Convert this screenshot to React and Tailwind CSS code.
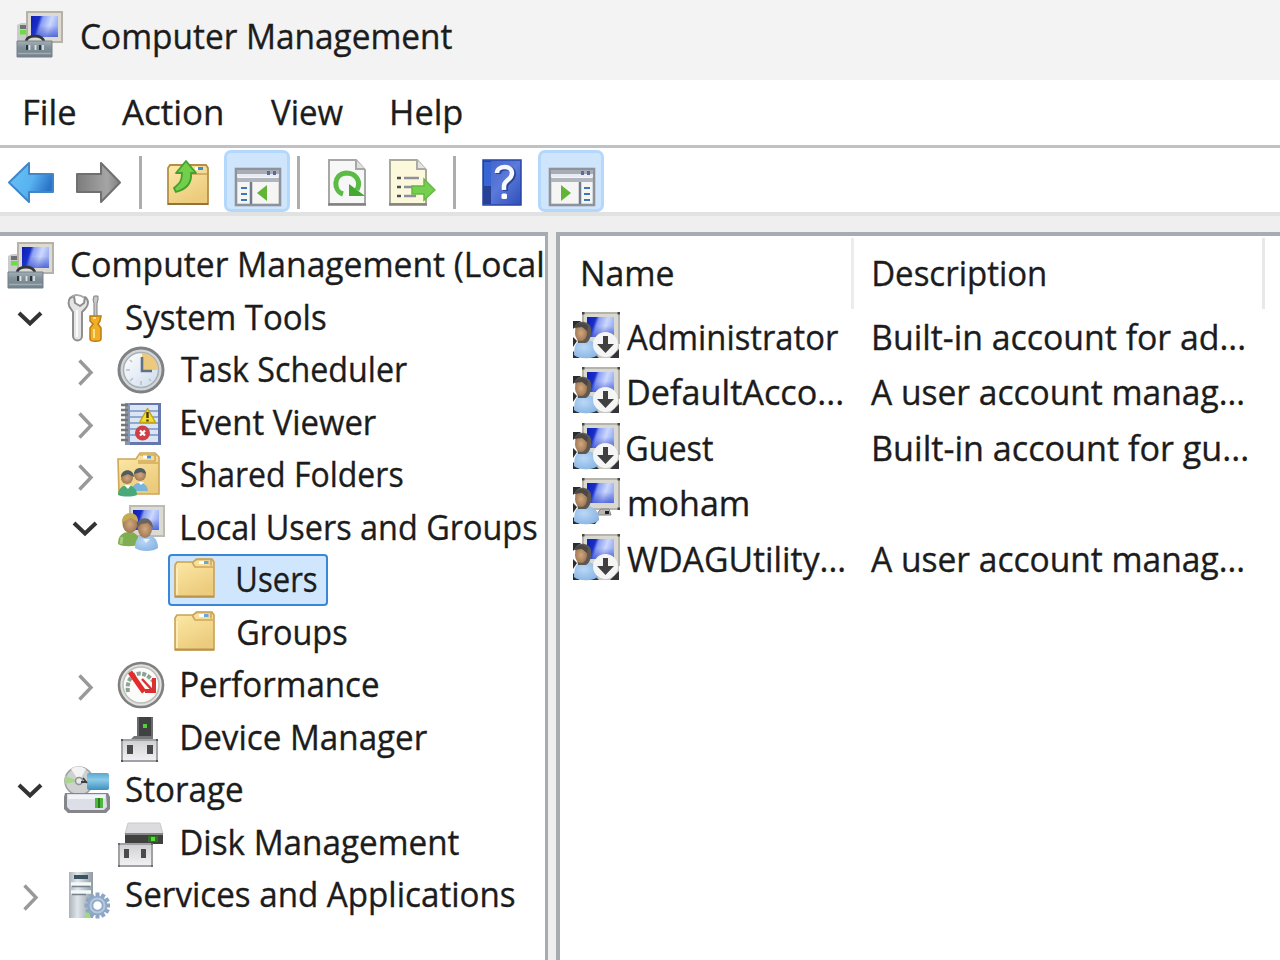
import React from 'react';

const FONT = '35px "Open Sans"';
let ctx;

// Label stretched horizontally so that its ink spans exactly `w` pixels.
function Label({ children, w, className = '' }) {
  ctx = ctx || document.createElement('canvas').getContext('2d');
  ctx.font = FONT;
  const m = ctx.measureText(children);
  const scale = w / (m.actualBoundingBoxLeft + m.actualBoundingBoxRight);
  return (
    <span
      className={`block shrink-0 whitespace-nowrap text-[35px] leading-[48px] [-webkit-text-stroke:0.35px_#1c1c1c] ${className}`}
      style={{ width: w }}
    >
      <span
        className="block w-max origin-left"
        style={{ transform: `translateX(${m.actualBoundingBoxLeft * scale}px) scaleX(${scale})` }}
      >
        {children}
      </span>
    </span>
  );
}

function Svg({ children, className = 'h-12 w-12' }) {
  return (
    <svg viewBox="0 0 48 48" className={`block shrink-0 ${className}`} fill="none">
      {children}
    </svg>
  );
}

function Defs() {
  return (
    <svg className="absolute h-0 w-0">
      <defs>
        <linearGradient id="screen" x1="0" y1="0" x2="1" y2="0.25">
          <stop offset="0" stopColor="#0d1fb4" />
          <stop offset="0.32" stopColor="#1a2fc8" />
          <stop offset="0.44" stopColor="#8a9ef2" />
          <stop offset="0.75" stopColor="#ccd8fd" />
          <stop offset="1" stopColor="#9db2f4" />
        </linearGradient>
        <linearGradient id="shade" x1="0" y1="0" x2="0" y2="1">
          <stop offset="0.45" stopColor="#2038c8" stopOpacity="0" />
          <stop offset="1" stopColor="#2038c8" stopOpacity="0.6" />
        </linearGradient>
        <linearGradient id="folder" x1="0" y1="0" x2="0.5" y2="1">
          <stop offset="0" stopColor="#fdeaa9" />
          <stop offset="1" stopColor="#eccb7c" />
        </linearGradient>
        <linearGradient id="blue" x1="0" y1="0" x2="1" y2="0.4">
          <stop offset="0.2" stopColor="#64bdf5" />
          <stop offset="0.6" stopColor="#58b2f0" />
          <stop offset="1" stopColor="#2b74c8" />
        </linearGradient>
        <linearGradient id="grey" x1="0" y1="0" x2="1" y2="0">
          <stop offset="0" stopColor="#7c7c7c" />
          <stop offset="0.7" stopColor="#a5a5a5" />
          <stop offset="1" stopColor="#808080" />
        </linearGradient>
        <linearGradient id="steel" x1="0" y1="0" x2="1" y2="0">
          <stop offset="0" stopColor="#a9b3ba" />
          <stop offset="0.35" stopColor="#dfe6ea" />
          <stop offset="1" stopColor="#8f9ba4" />
        </linearGradient>
        <linearGradient id="box" x1="0" y1="0" x2="0" y2="1">
          <stop offset="0" stopColor="#a3afb6" />
          <stop offset="0.4" stopColor="#82909a" />
          <stop offset="1" stopColor="#74828c" />
        </linearGradient>
        <linearGradient id="dial" x1="0" y1="0" x2="1" y2="1">
          <stop offset="0" stopColor="#ffffff" />
          <stop offset="1" stopColor="#cddcec" />
        </linearGradient>
        <linearGradient id="help" x1="0" y1="0" x2="1" y2="1">
          <stop offset="0" stopColor="#3f60c8" />
          <stop offset="0.5" stopColor="#5b7ada" />
          <stop offset="1" stopColor="#2f4fb8" />
        </linearGradient>
        <linearGradient id="usb" x1="0" y1="0" x2="0" y2="1">
          <stop offset="0" stopColor="#d0d0d4" />
          <stop offset="1" stopColor="#f2f2f4" />
        </linearGradient>
        <linearGradient id="cyan" x1="0" y1="0" x2="0" y2="1">
          <stop offset="0" stopColor="#5aa6cf" />
          <stop offset="0.4" stopColor="#8ccbe8" />
          <stop offset="1" stopColor="#3f8fc0" />
        </linearGradient>
        <radialGradient id="face" cx="0.5" cy="0.5" r="0.6">
          <stop offset="0" stopColor="#d3a87e" />
          <stop offset="1" stopColor="#96704c" />
        </radialGradient>
        <radialGradient id="shirt" cx="0.4" cy="0.4" r="0.7">
          <stop offset="0" stopColor="#b9d8f6" />
          <stop offset="1" stopColor="#86b2e2" />
        </radialGradient>
      </defs>
    </svg>
  );
}

function ComputerIcon() {
  return (
    <Svg>
      <path d="M2 15l4-2h6v19H2z" fill="#c9cccd" />
      <path d="M5 15h7v4H5z" fill="#6b7276" />
      <path d="M5 20h6v4.500H5z" fill="#69e03a" />
      <rect x="12" y="2" width="35" height="30" fill="#dddbd1" stroke="#b5b3a9" strokeWidth="2" />
      <rect x="16" y="6" width="27" height="21" fill="url(#screen)" />
      <rect x="16" y="6" width="27" height="21" fill="url(#shade)" />
      <path d="M11 31c2-6 15-7 18 0" stroke="#30363a" strokeWidth="2.600" />
      <path d="M2 31h35v16H2z" fill="url(#box)" stroke="#74818a" strokeWidth="1" />
      <path d="M3 43.500h33" stroke="#9fadb6" strokeWidth="1.500" />
      <path d="M12 35v5M25 35v5" stroke="#2e3438" strokeWidth="2" />
      <path d="M14.500 35v5M20.500 35v5M28 35v5" stroke="#d9dfe2" strokeWidth="1.800" />
    </Svg>
  );
}

function ToolsIcon() {
  return (
    <Svg>
      <path d="M8 4c-2 3-2 8 1 11l2 3v24c0 6 9 6 9 0V18l3-3c4-4 4-9 0-12l-1 6-4 3-5-3-1-7z" fill="#e4e4e4" stroke="#8e8e8e" strokeWidth="2" strokeLinejoin="round" />
      <path d="M15 16v27" stroke="#fafafa" strokeWidth="2" />
      <path d="M10 2.500c3-2 8-2 12 1" stroke="#a8a8a8" strokeWidth="2" />
      <path d="M32 2h4v4l-1 3v14h-3V9l-1-3z" fill="#c8c8c8" stroke="#808080" strokeWidth="1" />
      <path d="M28 22h11l-1 5-2 3 3 4v11c0 3-11 3-11 0V34l3-4-3-3z" fill="#efae27" stroke="#bd7b10" strokeWidth="1.500" />
      <path d="M32 35v9M31 24h3" stroke="#ffe085" strokeWidth="2" />
    </Svg>
  );
}

function ClockIcon() {
  return (
    <Svg>
      <circle cx="24" cy="24" r="22" fill="#d4d6d8" stroke="#7f8284" strokeWidth="3" />
      <circle cx="24" cy="24" r="17.500" fill="url(#dial)" stroke="#a9b1b8" strokeWidth="1.500" />
      <path d="M25 24V7a17 17 0 0 1 16 17z" fill="#ecc97c" />
      <path d="M25 11v14h10" stroke="#627286" strokeWidth="2.600" />
      <path d="M24 35v4M9 24h4M13 14l2 2M13 35l3-3M34 35l-2-2" stroke="#b4bfca" strokeWidth="1.500" />
    </Svg>
  );
}

function EventIcon() {
  return (
    <Svg>
      <rect x="8" y="4" width="36" height="42" fill="#6478ad" />
      <rect x="12" y="6" width="29" height="37" fill="#dbe6f4" />
      <path d="M12 12h29M12 18h29M12 24h29M12 30h29M12 36h29" stroke="#91a9ce" strokeWidth="1.800" />
      <path d="M8 4h5v42H8z" fill="#8796ae" />
      <path d="M4 6h7M4 11h7M4 16h7M4 21h7M4 26h7M4 31h7M4 36h7M4 41h7" stroke="#777" strokeWidth="2.600" />
      <path d="M30.500 9.500l8 14h-16z" fill="#f5dc35" stroke="#c5a615" strokeWidth="1.500" strokeLinejoin="round" />
      <path d="M30.500 13v6M30.500 20.500v2" stroke="#433b17" strokeWidth="2.400" />
      <circle cx="25.500" cy="34" r="7.500" fill="#cf3f45" />
      <path d="M23 31.500l5 5M28 31.500l-5 5" stroke="#fff" strokeWidth="2.200" />
    </Svg>
  );
}

function SharedIcon() {
  return (
    <Svg>
      <path d="M1 8h18l4-6h15l4 4v37H2z" fill="url(#folder)" stroke="#cda75a" strokeWidth="1.600" />
      <path d="M21 12h20M23 4h15v6H21" stroke="#d3aa59" strokeWidth="1.600" />
      <path d="M26 6h8" stroke="#fff" strokeWidth="3" />
      <path d="M30 6h4" stroke="#4a94dd" strokeWidth="3" />
      <path d="M15 40c0-11 15-11 16 0z" fill="#77b5dc" />
      <path d="M21 31l3 3 3-3z" fill="#fff" />
      <circle cx="23" cy="24" r="6" fill="url(#face)" />
      <path d="M17 23c0-8 12-8 12 0l-5-2z" fill="#505c62" />
      <path d="M1 44c0-13 19-13 19 0-5 2-14 2-19 0z" fill="#4aa978" />
      <path d="M7 34l4 4 3-4z" fill="#fff" />
      <circle cx="10" cy="27" r="6" fill="url(#face)" />
      <path d="M4 26c0-9 13-9 13 0l-6-3z" fill="#505c62" />
    </Svg>
  );
}

function GroupIcon() {
  return (
    <Svg>
      <rect x="13" y="2" width="34" height="30" fill="#dbdad3" stroke="#bbbab3" strokeWidth="2" />
      <rect x="16" y="6" width="26" height="20" fill="url(#screen)" />
      <rect x="16" y="6" width="26" height="20" fill="url(#shade)" />
      <path d="M1 40c0-9 5-12 11-12s11 3 10 12c-4 3-17 3-21 0z" fill="#7fae52" />
      <path d="M5 33l-1 7" stroke="#a5cb7b" strokeWidth="3" />
      <ellipse cx="13" cy="20" rx="7.500" ry="9" fill="url(#face)" />
      <path d="M5 19C4 6 22 6 21 18l-7-4z" fill="#c2ab53" />
      <path d="M18 44c0-10 5-13 11-13s12 3 12 13c-5 4-18 4-23 0z" fill="url(#shirt)" />
      <ellipse cx="28" cy="25" rx="7" ry="9" fill="url(#face)" />
      <path d="M20 24c-1-13 16-13 16 0l-5-5-7 1z" fill="#6b6560" />
      <path d="M26 35l3 4 4-4z" fill="#e9f2fb" />
    </Svg>
  );
}

function FolderIcon() {
  return (
    <Svg>
      <path d="M2 9l2-3h16l4-3h15l2 3v35H2z" fill="url(#folder)" stroke="#c8a254" strokeWidth="1.600" strokeLinejoin="round" />
      <path d="M2 40.500h39" stroke="#b99450" strokeWidth="2" />
      <path d="M19 6l3 5h18M22 3.500h16v6" stroke="#cfa65a" strokeWidth="1.600" />
      <path d="M26 6.500h8" stroke="#fff" strokeWidth="3" />
      <path d="M31 6.500h4.500" stroke="#67a7da" strokeWidth="3" />
      <path d="M4 12v27" stroke="#fff1c2" strokeWidth="1.500" />
    </Svg>
  );
}

function PerformanceIcon() {
  return (
    <Svg>
      <circle cx="24" cy="24" r="22" fill="#e2e2e0" stroke="#808080" strokeWidth="2.600" />
      <circle cx="24" cy="24" r="18" fill="#fbfbf9" stroke="#bdbdb9" strokeWidth="1.500" />
      <path d="M11 31c-3-18 14-25 25-11" stroke="#8ba294" strokeWidth="4" strokeDasharray="4 1.500" />
      <path d="M13 11l14 20" stroke="#e32b2b" strokeWidth="5" />
      <path d="M37 17v13h-9" stroke="#d93232" strokeWidth="4" />
      <path d="M25 18l12 13" stroke="#d93232" strokeWidth="2.400" />
    </Svg>
  );
}

function DeviceIcon() {
  return (
    <Svg>
      <path d="M20 3h16v21H20z" fill="#404142" />
      <path d="M20 3h2v21h-2zM34 3h2v21h-2z" fill="#6a6b6c" />
      <rect x="26" y="10" width="4" height="4" fill="#55cf35" />
      <path d="M14 25l3-3h19v3z" fill="#73777a" />
      <rect x="5" y="26" width="35" height="21" fill="url(#usb)" stroke="#a2a2a8" strokeWidth="2" />
      <path d="M10 31h6v9h-6zM30 31h6v9h-6z" fill="#4a4a4c" />
      <path d="M4 25h2v2H4zM39 25h2v2h-2zM4 46h2v2H4zM39 46h2v2h-2z" fill="#55555a" />
    </Svg>
  );
}

function StorageIcon() {
  return (
    <Svg>
      <circle cx="17" cy="15" r="14" fill="#cfd1d1" stroke="#a0a4a4" strokeWidth="1.600" />
      <path d="M17 15L9 3a14 14 0 0 1 15 0z" fill="#f3f3f3" />
      <path d="M17 15L3 10v8z" fill="#a8d68b" />
      <circle cx="17" cy="15" r="3.500" fill="#e8e8e8" stroke="#8d9292" strokeWidth="1.500" />
      <rect x="25" y="7" width="22" height="17" rx="2" fill="url(#cyan)" />
      <path d="M19 16h6M21 12l4 5" stroke="#3b4144" strokeWidth="1.800" />
      <path d="M3 27h43l2 4v12l-4 4H6l-4-4V31z" fill="#84868b" />
      <path d="M5 28h39l1 13-3 3H8l-3-3z" fill="#dcdee8" />
      <path d="M6 29h37v4H6z" fill="#f2f3f7" />
      <rect x="33" y="32" width="8" height="10" fill="#4fb73b" />
      <path d="M37 32v10" stroke="#267b20" strokeWidth="2" />
    </Svg>
  );
}

function DiskIcon() {
  return (
    <Svg>
      <path d="M11 4h32l3 11H8z" fill="#dcdcde" stroke="#c9c9cb" strokeWidth="1" />
      <path d="M8 14h38v11H8z" fill="#404041" />
      <path d="M8 14h38v2H8z" fill="#88888a" />
      <path d="M31 17h10v6H31z" fill="#28771f" />
      <rect x="34" y="18" width="4" height="4" fill="#54df38" />
      <rect x="2" y="25" width="33" height="22" fill="url(#usb)" stroke="#a0a0a5" strokeWidth="2" />
      <path d="M7 30h5v9H7zM24 30h5v9h-5z" fill="#4a4a4c" />
      <path d="M1 24h2v2H1zM34 24h2v2h-2zM1 46h2v2H1zM34 46h2v2h-2z" fill="#6c6c70" />
    </Svg>
  );
}

function ServicesIcon() {
  const teeth = [0, 30, 60, 90, 120, 150, 180, 210, 240, 270, 300, 330];
  return (
    <Svg>
      <path d="M7 1h24v46H7z" fill="url(#steel)" />
      <path d="M12 4h14v4H12z" fill="#3d5261" />
      <path d="M9 13h20M9 21h20" stroke="#f6f9fa" strokeWidth="3.500" />
      <path d="M10 15.500h18M10 23.500h14" stroke="#73828c" strokeWidth="1.600" />
      {teeth.map((a) => (
        <rect key={a} x="33.500" y="21.500" width="4" height="5" fill="#8ea5c4" transform={`rotate(${a} 35.500 34.500)`} />
      ))}
      <circle cx="35.500" cy="34.500" r="7" stroke="#8fa8c8" strokeWidth="5.500" fill="#fff" />
      <circle cx="35.500" cy="34.500" r="7" stroke="#b5c8de" strokeWidth="2" />
      <path d="M23 41l4 1 2 5h-6z" fill="#9edb7d" />
    </Svg>
  );
}

function UserIcon({ disabled }) {
  return (
    <Svg>
      {disabled ? <path d="M10 1h37v46H24L10 32z" fill="#c9c8c0" /> : null}
      {disabled ? <path d="M47 38v9h-9zM22 42l5 5h-7z" fill="#33353a" /> : null}
      <rect x="11" y="2" width="36" height="30" fill="#dad9d1" stroke="#b5b4ac" strokeWidth="2" />
      <path d="M10 1h2.500v2.500H10zM45.500 1H48v2.500h-2.500z" fill="#474743" />
      <rect x="15" y="6" width="27" height="20" fill="url(#screen)" />
      <rect x="15" y="6" width="27" height="20" fill="url(#shade)" />
      {disabled ? null : (
        <g>
          <path d="M45.500 30.500H48V33h-2.500z" fill="#474743" />
          <path d="M29 32h8l2 6H25l2-4z" fill="#b7b7b4" stroke="#858583" strokeWidth="1" />
          <path d="M33 34h4v3h-4z" fill="#222" />
        </g>
      )}
      <path d="M1 10h8L1 18zM1 26l4 4-4 6zM1 40l7 7H1zM20 42h7l-4 5h-6z" fill="#292c30" />
      <path d="M2 44c0-11 3-15 11-15 8 0 14 4 14 14-4 5-20 6-25 1z" fill="url(#shirt)" />
      <path d="M3 15c2-6 14-6 16 2 1 6-1 13-5 15H6z" fill="#5d5854" />
      <ellipse cx="9" cy="22" rx="6" ry="8" fill="url(#face)" />
      <path d="M2 17c1-5 9-7 14-2l-1 5-5-4z" fill="#4b4844" />
      {disabled ? (
        <g>
          <circle cx="33.500" cy="33.500" r="12.500" fill="#f5f5f5" />
          <path d="M31 25h5v8h6l-8.500 9-8.500-9h6z" fill="#404040" />
        </g>
      ) : null}
    </Svg>
  );
}

function ArrowIcon({ right }) {
  return (
    <Svg>
      {right ? (
        <path d="M3 15h24V4l19 19.500L27 43V33H3z" fill="url(#grey)" stroke="#707070" strokeWidth="2" strokeLinejoin="round" />
      ) : (
        <path d="M46 15H22V4L2 23.500 22 43V33h24z" fill="url(#blue)" stroke="#3f87c8" strokeWidth="2" strokeLinejoin="round" />
      )}
    </Svg>
  );
}

function UpIcon() {
  return (
    <Svg>
      <path d="M3 9l2-3h36l2 3v36H3z" fill="url(#folder)" stroke="#b58f45" strokeWidth="1.800" />
      <path d="M3 45h40" stroke="#94733a" strokeWidth="2" />
      <path d="M18 15h24M20 8v6" stroke="#c9a25a" strokeWidth="1.500" />
      <path d="M30 9.500h4" stroke="#fff" strokeWidth="3" />
      <path d="M33 9.500h5" stroke="#3b8ae0" strokeWidth="3" />
      <path d="M21 2L11 14h6c0 8-2 10-8 15l2 4c11-3 16-9 15-19h5z" fill="#72cf4c" stroke="#43a12d" strokeWidth="1.800" strokeLinejoin="round" />
    </Svg>
  );
}

function PaneIcon({ flipped }) {
  return (
    <Svg>
      <rect x="2" y="8" width="44" height="36" fill="#f5f5f3" stroke="#8e939b" strokeWidth="2.600" />
      <path d="M3 9h42v4H3z" fill="#a8adb5" />
      <path d="M3 13h42v3H3z" fill="#e8ebf1" />
      <path d="M3 17h42v4H3z" fill="#b0b5be" />
      <path d="M33 10h3v4h-3zM39 10h3v4h-3z" fill="#5a6b94" />
      {flipped ? (
        <g>
          <path d="M32 21v22" stroke="#727b8a" strokeWidth="2.500" />
          <path d="M36 27h6M36 33h6M36 39h6" stroke="#3b78ba" strokeWidth="2.200" />
          <path d="M13 24l10 8-10 8z" fill="#60b537" />
        </g>
      ) : (
        <g>
          <path d="M17 21v22" stroke="#727b8a" strokeWidth="2.500" />
          <path d="M7 27h6M7 33h6M7 39h6" stroke="#3b78ba" strokeWidth="2.200" />
          <path d="M33 24l-10 8 10 8z" fill="#60b537" />
        </g>
      )}
    </Svg>
  );
}

function RefreshIcon() {
  return (
    <Svg>
      <path d="M5 1h27l9 10v34H5z" fill="#f7f7f7" stroke="#a7a7a7" strokeWidth="2" />
      <path d="M32 1v9h9" fill="#e0e0e0" stroke="#a7a7a7" strokeWidth="2" />
      <path d="M4 45.500h38" stroke="#808080" strokeWidth="2.500" />
      <path d="M19 35c-10-3-10-20 3-21 11 0 15 9 11 17" stroke="#5abb45" strokeWidth="5" />
      <path d="M26 27v9h12z" fill="#45a831" stroke="#45a831" strokeWidth="2" />
    </Svg>
  );
}

function ExportIcon() {
  return (
    <Svg>
      <path d="M2 1h27l9 10v34H2z" fill="#fcf8dc" stroke="#aaa899" strokeWidth="2" />
      <path d="M29 1v9h9" fill="#e6e4dc" stroke="#aaa" strokeWidth="2" />
      <path d="M1 45.500h38" stroke="#85837a" strokeWidth="2.500" />
      <path d="M9 19h4M9 28h4M9 37h4" stroke="#4c4c58" strokeWidth="2.600" />
      <path d="M16 19h15M16 28h10M16 37h12" stroke="#8f8f9e" strokeWidth="2.600" />
      <path d="M24 27h12v-7l11 11-11 10v-6H24z" fill="#76cf4e" stroke="#64b940" strokeWidth="1.500" />
    </Svg>
  );
}

function HelpIcon() {
  return (
    <Svg>
      <rect x="5" y="1" width="38" height="45" fill="url(#help)" stroke="#2745a7" strokeWidth="1.500" />
      <path d="M5 2h8v43H5z" fill="#274197" />
      <path d="M6 3h7v24H6z" fill="#3566d4" />
      <path d="M19 14c0-8 15-8 15 0 0 7-8 7-8 13v4" stroke="#2a4396" strokeWidth="5" transform="translate(1.500 1)" />
      <path d="M19 14c0-8 15-8 15 0 0 7-8 7-8 13v4" stroke="#f6f8fd" strokeWidth="4.500" />
      <rect x="23.500" y="34.500" width="5.500" height="5.500" rx="1.500" fill="#fff" />
    </Svg>
  );
}

function Chevron({ open }) {
  return (
    <svg viewBox="0 0 28 28" className="block h-7 w-7 shrink-0 overflow-visible" fill="none">
      {open ? (
        <path d="M3 9l11 10.500L25 9" stroke="#333" strokeWidth="4" />
      ) : (
        <path d="M8.500 4.500L20 16.500 8.500 28.500" stroke="#999" strokeWidth="3.400" />
      )}
    </svg>
  );
}

const TREE = [
  { pad: 'pl-[16px]', icon: ToolsIcon, label: 'System Tools', w: 200, open: true },
  { pad: 'pl-[71px]', icon: ClockIcon, label: 'Task Scheduler', w: 226, open: false },
  { pad: 'pl-[71px]', icon: EventIcon, label: 'Event Viewer', w: 194, open: false, bump: true },
  { pad: 'pl-[71px]', icon: SharedIcon, label: 'Shared Folders', w: 222, open: false },
  { pad: 'pl-[71px]', icon: GroupIcon, label: 'Local Users and Groups', w: 355, open: true, bump: true },
  { folder: true, selected: true, label: 'Users', w: 79 },
  { folder: true, label: 'Groups', w: 109 },
  { pad: 'pl-[71px]', icon: PerformanceIcon, label: 'Performance', w: 196, open: false, bump: true },
  { pad: 'pl-[71px]', icon: DeviceIcon, label: 'Device Manager', w: 245, bump: true },
  { pad: 'pl-[16px]', icon: StorageIcon, label: 'Storage', w: 116, open: true },
  { pad: 'pl-[71px]', icon: DiskIcon, label: 'Disk Management', w: 277, bump: true },
  { pad: 'pl-[16px]', icon: ServicesIcon, label: 'Services and Applications', w: 389, open: false },
];

function TreeRow({ item }) {
  if (item.folder) {
    return (
      <div className="flex h-[52.5px] items-center pl-[168px]">
        <div
          className={`flex h-[52px] items-center rounded-[4px] border-[2px] pl-[3px] ${
            item.selected ? 'w-[160px] border-[#3a87d8] bg-[#cfe6fd]' : 'border-transparent'
          }`}
        >
          <FolderIcon />
          <Label w={item.w} className="mb-[2px] ml-[16.5px]">{item.label}</Label>
        </div>
      </div>
    );
  }
  const Icon = item.icon;
  return (
    <div className={`flex h-[52.5px] items-center ${item.pad}`}>
      {item.open === undefined ? <div className="w-7 shrink-0" /> : <Chevron open={item.open} />}
      <div className="ml-[18px]"><Icon /></div>
      <Label w={item.w} className={`mb-[2px] ${item.bump ? 'ml-[17px]' : 'ml-[15.5px]'}`}>{item.label}</Label>
    </div>
  );
}

const USERS = [
  { name: 'Administrator', nw: 211, disabled: true, desc: 'Built-in account for ad...', dw: 370, dx: 'ml-[1px]' },
  { name: 'DefaultAcco...', nw: 213, nx: 'ml-[8.5px]', disabled: true, desc: 'A user account manag...', dw: 372, dx: 'ml-[-2px]' },
  { name: 'Guest', nw: 86, disabled: true, desc: 'Built-in account for gu...', dw: 373, dx: 'ml-[1px]' },
  { name: 'moham', nw: 119, nx: 'ml-[8.5px]', disabled: false },
  { name: 'WDAGUtility...', nw: 217, disabled: true, desc: 'A user account manag...', dw: 372, dx: 'ml-[-2px]' },
];

function Separator({ className }) {
  return <div className={`h-[53px] w-[3px] bg-[#adadad] ${className}`} />;
}

function Toggle({ children, className }) {
  return (
    <div className={`mb-[3px] flex h-[62px] w-[66px] items-center justify-center rounded-[7px] border-[3px] border-[#b3d8fb] bg-[#cfe5fb] pl-[2px] pt-[8px] ${className}`}>
      {children}
    </div>
  );
}

export default function App() {
  return (
    <div className="flex h-[960px] w-[1280px] flex-col overflow-hidden bg-white font-['Open_Sans','Noto_Sans',sans-serif] text-[#1c1c1c]">
      <Defs />
      <header className="flex h-[80px] shrink-0 bg-[#f3f3f3] pl-[15px] pt-[10px]">
        <ComputerIcon />
        <Label w={370} className="ml-[19px] mt-[2px]">Computer Management</Label>
      </header>

      <nav className="flex h-[65px] shrink-0 pl-[25px] pt-[8px]">
        <Label w={50}>File</Label>
        <Label w={100} className="ml-[47px]">Action</Label>
        <Label w={72} className="ml-[49px]">View</Label>
        <Label w={70} className="ml-[49px]">Help</Label>
      </nav>

      <div className="flex h-[71px] shrink-0 items-center border-b-4 border-t-[3px] border-b-[#e2e2e2] border-t-[#bfc1c2] pl-[7px] pt-[5px]">
        <ArrowIcon />
        <div className="ml-[19px]"><ArrowIcon right /></div>
        <Separator className="ml-[17px]" />
        <div className="ml-[23px]"><UpIcon /></div>
        <Toggle className="ml-[11px]"><PaneIcon /></Toggle>
        <Separator className="ml-[7px]" />
        <div className="ml-[24px]"><RefreshIcon /></div>
        <div className="ml-[16px]"><ExportIcon /></div>
        <Separator className="ml-[17px]" />
        <div className="ml-[22px]"><HelpIcon /></div>
        <Toggle className="ml-[12px]"><PaneIcon flipped /></Toggle>
      </div>

      <main className="flex min-h-0 grow gap-2 bg-[#efefef] pt-4">
        <section className="w-[548px] shrink-0 overflow-hidden border-r-[3px] border-t-4 border-[#a7abb2] bg-white pt-[3px]">
          <div className="flex h-[52.5px] items-center pl-[6px]">
            <ComputerIcon />
            <Label w={470} className="mb-[2px] ml-[17.5px]">Computer Management (Local</Label>
          </div>
          {TREE.map((item) => <TreeRow key={item.label} item={item} />)}
        </section>

        <section className="min-w-0 grow border-l-4 border-t-4 border-[#a7abb2] bg-white">
          <div className="flex h-[75px] pt-[2px]">
            <div className="h-[71px] w-[294px] shrink-0 border-r-[3px] border-[#ececec] pl-[23px] pt-[11px]">
              <Label w={90}>Name</Label>
            </div>
            <div className="h-[71px] w-[411px] shrink-0 border-r-[3px] border-[#e8e8e8] pl-[20px] pt-[11px]">
              <Label w={171}>Description</Label>
            </div>
          </div>
          {USERS.map((u) => (
            <div key={u.name} className="flex h-[55.4px] pl-[12px]">
              <div className="flex w-[301px] shrink-0">
                <UserIcon disabled={u.disabled} />
                <Label w={u.nw} className={`mt-[2px] ${u.nx || 'ml-[7px]'}`}>{u.name}</Label>
              </div>
              {u.desc ? <Label w={u.dw} className={`mt-[2px] ${u.dx}`}>{u.desc}</Label> : null}
            </div>
          ))}
        </section>
      </main>
    </div>
  );
}
